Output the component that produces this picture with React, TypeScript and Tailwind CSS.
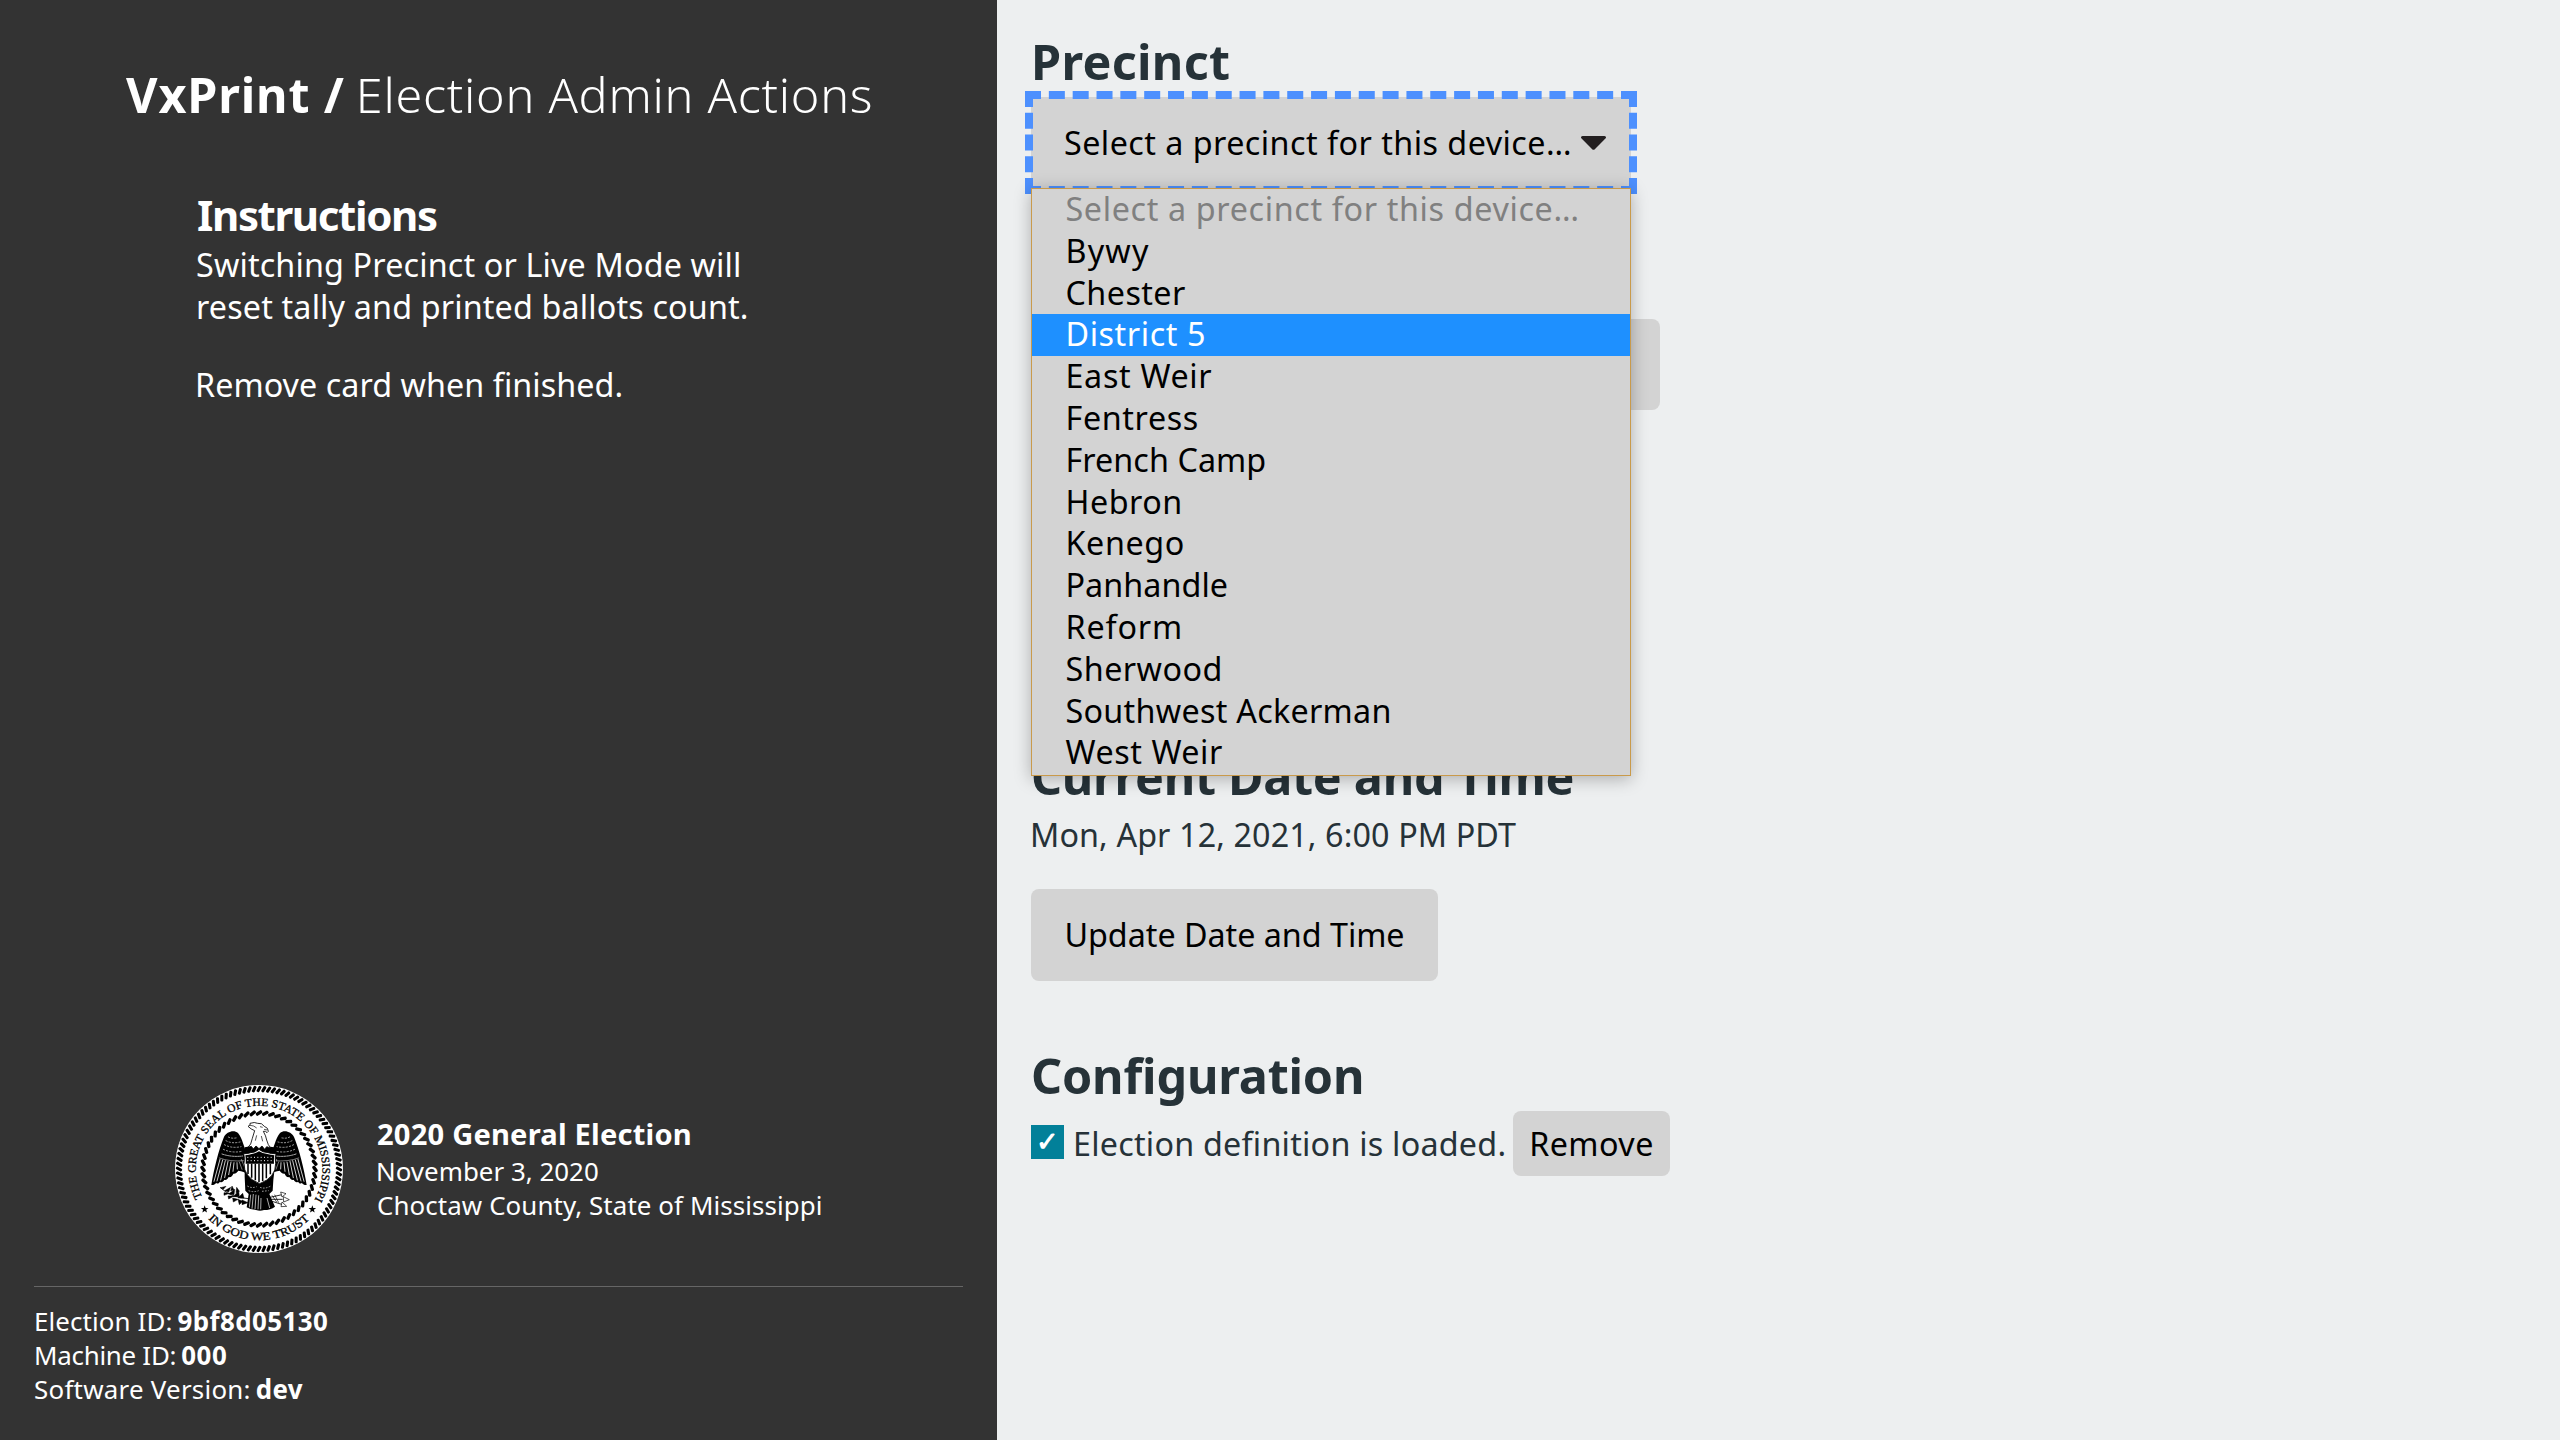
import React from 'react'

const precincts = [
  { name: 'Select a precinct for this device…', tracking: 'tracking-[0.64px]' },
  { name: 'Bywy', tracking: 'tracking-[1.2px]' },
  { name: 'Chester', tracking: 'tracking-[0.43px]' },
  { name: 'District 5', tracking: 'tracking-[0.57px]' },
  { name: 'East Weir', tracking: 'tracking-[0.66px]' },
  { name: 'Fentress', tracking: 'tracking-[0.62px]' },
  { name: 'French Camp', tracking: 'tracking-[0.06px]' },
  { name: 'Hebron', tracking: 'tracking-[0.5px]' },
  { name: 'Kenego', tracking: 'tracking-[0.6px]' },
  { name: 'Panhandle', tracking: 'tracking-[0.06px]' },
  { name: 'Reform', tracking: 'tracking-[0.85px]' },
  { name: 'Sherwood', tracking: 'tracking-[0.47px]' },
  { name: 'Southwest Ackerman', tracking: 'tracking-[0.28px]' },
  { name: 'West Weir', tracking: 'tracking-[0.55px]' },
]

function Rope({ count, radius, rx, ry, slant }: { count: number; radius: number; rx: number; ry: number; slant: number }) {
  return (
    <g fill="#000">
      {Array.from({ length: count }, (_, i) => (
        <rect
          key={i}
          x={-rx}
          y={-ry}
          width={rx * 2}
          height={ry * 2}
          rx={ry * 0.8}
          transform={`rotate(${(i * 360) / count} 297 297) translate(297 ${297 - radius}) rotate(${slant})`}
        />
      ))}
    </g>
  )
}

function Wing() {
  return (
    <g>
      <path
        d="M262 250C252 236 248 205 234 189C222 179 200 184 191 203C176 240 162 296 154 345C160 346 165 342 169 338C171 343 176 341 180 335C184 339 190 335 193 329C198 332 204 326 206 321C212 323 218 317 220 311C227 312 232 306 235 302C246 303 256 306 264 316Z"
        fill="#000"
      />
      <g stroke="#fff" strokeWidth="2.4" fill="none" strokeLinecap="round">
        <path d="M180 268L162 334M188 270L171 333M196 272L182 330M204 274L194 323M213 276L206 314M222 278L219 304M231 278L232 297" />
        <path d="M186 252Q215 262 248 258" strokeDasharray="7 3" strokeWidth="2" />
        <path d="M190 238Q215 250 246 244M193 224Q215 236 243 230M198 212Q216 222 240 216M205 201Q216 207 232 203" strokeDasharray="4 6" strokeWidth="1.8" />
        <path d="M178 264Q210 276 252 272" strokeWidth="1.4" />
        <path d="M238 276L246 298M244 268L254 292" strokeWidth="1.4" />
      </g>
    </g>
  )
}

function Star({ x, y }: { x: number; y: number }) {
  return (
    <path
      transform={`translate(${x} ${y})`}
      d="M0-12L2.9-4L11.4-3.7L4.7 1.5L7 9.7L0 5L-7 9.7L-4.7 1.5L-11.4-3.7L-2.9-4Z"
      fill="#000"
    />
  )
}

function Seal() {
  return (
    <svg viewBox="45 45 504 504" className="h-[168px] w-[168px] shrink-0">
      <defs>
        <path id="seal-top" d="M127 382A190 190 0 1 1 462 392" />
        <path id="seal-bottom" d="M142 444A213 213 0 0 0 452 444" />
      </defs>
      <circle cx="297" cy="297" r="252" fill="#fff" />
      <Rope count={104} radius={240} rx={10} ry={4.6} slant={-62} />
      <Rope count={56} radius={168} rx={10.5} ry={5} slant={-34} />
      <g fontFamily="'Liberation Serif', serif" fontSize="34" fill="#000" stroke="#000" strokeWidth="0.9">
        <text>
          <textPath href="#seal-top" textLength="780" lengthAdjust="spacingAndGlyphs">
            THE GREAT SEAL OF THE STATE OF MISSISSIPPI
          </textPath>
        </text>
        <text>
          <textPath href="#seal-bottom" startOffset="3" textLength="340" lengthAdjust="spacingAndGlyphs">
            IN GOD WE TRUST
          </textPath>
        </text>
      </g>
      <Star x={134} y={418} />
      <Star x={457} y={418} />

      <Wing />
      <g transform="translate(594 0) scale(-1 1)">
        <Wing />
      </g>

      {/* body and tail */}
      <path d="M254 232Q297 222 342 232L348 260L340 330L338 362L328 372L345 410Q332 420 312 420Q300 424 288 420Q272 420 260 412L266 372L256 362L254 320Z" fill="#000" />
      <g stroke="#fff" strokeWidth="2" fill="none">
        <path d="M272 374L268 412M280 372L276 416M288 374L285 418M296 376L294 418M303 384L302 418M321 384L329 414" />
        <path d="M262 348Q275 356 290 350M300 352Q315 358 332 348M266 362Q280 368 296 362M306 364L326 362" strokeDasharray="5 4" strokeWidth="1.8" />
      </g>

      {/* head */}
      <path
        d="M264 232L272 222L277 205L284 182Q273 178 264 169Q273 166 270 160Q284 155 293 160Q306 158 313 169Q325 173 325 184L321 188Q318 182 310 184Q318 198 320 210L325 224L332 234L320 230L314 238L306 228L297 236L288 228L280 237L274 229Z"
        fill="#fff"
        stroke="#000"
        strokeWidth="2.5"
      />
      <path d="M300 170L308 172M312 178L322 180M270 166Q282 166 290 174M290 196L286 212M304 198L308 214" stroke="#000" strokeWidth="2" fill="none" />

      {/* shield */}
      <path
        d="M251 251Q262 252 272 248Q286 248 297 238Q308 248 324 248Q334 252 348 251Q344 264 347 280Q348 322 299 341Q251 322 252 280Q255 264 251 251Z"
        fill="#fff"
        stroke="#000"
        strokeWidth="2.5"
      />
      <path d="M256 256Q268 255 275 252Q288 250 297 244Q307 250 322 252Q332 255 343 256Q341 268 342 281H257Q258 268 256 256Z" fill="#000" />
      <path d="M262 262H338M262 272H338" stroke="#fff" strokeWidth="3" strokeDasharray="3 7" />
      <path d="M264 281V312M275 281V323M286 281V331M297 281V337M308 281V333M319 281V325M331 281V313" stroke="#000" strokeWidth="4.6" />

      {/* olive branch */}
      <path d="M180 352Q215 385 268 386" stroke="#000" strokeWidth="2.5" fill="none" />
      <path
        d="M182 353l16-4l-8 9zM194 362l18-10l-6 14zM192 368l16 2l-16 6zM206 372l18-14l-2 16zM204 378l18 0l-16 9zM220 380l16-18l2 18zM218 384l16 4l-14 8zM234 384l14-14l4 14zM234 388l14 6l-10 10zM246 390l18 8l-18 6zM212 362l4-14l6 12zM228 368l2-16l8 12z"
        fill="#000"
        stroke="#000"
        strokeWidth="1.5"
      />

      {/* arrows */}
      <g stroke="#000" strokeWidth="2" fill="#fff">
        <path d="M330 382L366 374M332 388L368 388M330 392L368 404" fill="none" strokeWidth="2.5" />
        <path d="M362 366L378 371L366 381ZM370 380L388 389L371 396ZM366 396L380 409L363 410Z" />
        <path d="M336 376L350 396M344 374L356 398" />
      </g>
    </svg>
  )
}

function Sidebar() {
  return (
    <aside className="flex h-full w-[997px] shrink-0 flex-col bg-[#333333] text-white">
      <h1 className="mt-[64px] flex gap-[11px] pl-[126px] text-[48.5px] leading-[60px] whitespace-nowrap">
        <span className="font-bold tracking-[0.85px]">VxPrint /</span>
        <span className="font-light tracking-[0.74px]">Election Admin Actions</span>
      </h1>
      <div className="mt-[65px] pl-[196px] text-[32.3px] leading-[42px] whitespace-nowrap">
        <h2 className="ml-[1px] text-[42px] leading-[52px] font-bold tracking-[-1.37px]">Instructions</h2>
        <p className="mt-[2px] tracking-[0.15px]">
          Switching Precinct or Live Mode will
          <br />
          reset tally and printed ballots count.
        </p>
        <p className="mt-[36px] -ml-px tracking-[0.05px]">Remove card when finished.</p>
      </div>
      <div className="mt-auto flex items-center gap-[34px] pl-[175px] whitespace-nowrap">
        <Seal />
        <div className="text-[25.9px] leading-[34px]">
          <p className="mb-[2px] text-[29.1px] leading-[36px] font-bold tracking-[0.2px]">2020 General Election</p>
          <p className="-ml-px tracking-[0.02px]">November 3, 2020</p>
          <p className="tracking-[0.09px]">Choctaw County, State of Mississippi</p>
        </div>
      </div>
      <footer className="mx-[34px] mt-[33px] border-t border-[#666666] pt-[17px] pb-[34px] text-[25.9px] leading-[34px]">
        <p className="flex gap-[5px]">
          <span className="tracking-[0.11px]">Election ID:</span>
          <b className="tracking-[0.45px]">9bf8d05130</b>
        </p>
        <p className="flex gap-[5px]">
          <span className="tracking-[-0.26px]">Machine ID:</span>
          <b className="tracking-[0.55px]">000</b>
        </p>
        <p className="flex gap-[5px]">
          <span className="tracking-[0.25px]">Software Version:</span>
          <b className="tracking-[0.35px]">dev</b>
        </p>
      </footer>
    </aside>
  )
}

function PrecinctSelect() {
  return (
    <div className="relative mt-[6px] w-[600px]">
      <div className="flex h-[91px] items-center bg-[#d3d3d3] pl-[33px] text-black outline-8 -outline-offset-2 outline-[#4d90fe] outline-dashed">
        <span className="pb-[2px] tracking-[0.46px]">Select a precinct for this device…</span>
        <svg viewBox="0 0 25 14" className="mr-[25px] ml-auto h-[14px] w-[25px]">
          <path d="M1.5 0H23.5Q26 .6 24.4 2.6L13.8 13.3Q12.5 14.4 11.2 13.3L.6 2.6Q-1 .6 1.5 0Z" fill="#231f20" />
        </svg>
      </div>
      <ul className="absolute top-[91px] left-0 z-10 h-[588px] w-[600px] border border-[#c99a4b] bg-[#d3d3d3] text-black shadow-[0_3px_16px_rgba(0,0,0,0.28)]">
        {precincts.map((p, i) => (
          <li
            key={p.name}
            className={`h-[41.8px] pl-[33.5px] leading-[38px] ${p.tracking} ${
              i === 0 ? 'text-[#808080]' : i === 3 ? 'bg-[#1e90ff] text-white' : ''
            }`}
          >
            {p.name}
          </li>
        ))}
      </ul>
    </div>
  )
}

export default function App() {
  return (
    <div className="flex h-[1440px] w-[2560px] overflow-hidden bg-[#edeff0] font-['Noto_Sans',sans-serif]">
      <Sidebar />
      <main className="flex flex-1 flex-col items-start pl-[34px] text-[32.3px] leading-[42px] whitespace-nowrap text-[#263238]">
        <h1 className="mt-[31px] text-[48.5px] leading-[60px] font-bold tracking-[0.3px]">Precinct</h1>
        <PrecinctSelect />
        <div className="mt-[131px] h-[91px] w-[629px] rounded-lg bg-[#d3d3d3]" />
        <h1 className="mt-[336px] text-[48.5px] leading-[60px] font-bold tracking-[-0.27px]">Current Date and Time</h1>
        <p className="mt-[7px] -ml-px tracking-[0.11px]">Mon, Apr 12, 2021, 6:00 PM PDT</p>
        <button className="mt-[34px] h-[92px] w-[407px] rounded-lg bg-[#d3d3d3] pb-[2px] tracking-[-0.03px] text-black">
          Update Date and Time
        </button>
        <h1 className="mt-[64px] text-[48.5px] leading-[60px] font-bold tracking-[-0.17px]">Configuration</h1>
        <div className="mt-[6px] flex h-[65px] items-center">
          <span className="mb-[3px] flex h-[34px] w-[33px] items-center justify-center bg-[#028099] pb-[4px] text-[27px] leading-none font-bold text-white">
            ✓
          </span>
          <span className="ml-[9px] w-[440px] pb-[2px] tracking-[0.23px]">Election definition is loaded.</span>
          <button className="h-[65px] w-[157px] rounded-lg bg-[#d3d3d3] pb-[2px] tracking-[0.44px] text-black">Remove</button>
        </div>
      </main>
    </div>
  )
}
